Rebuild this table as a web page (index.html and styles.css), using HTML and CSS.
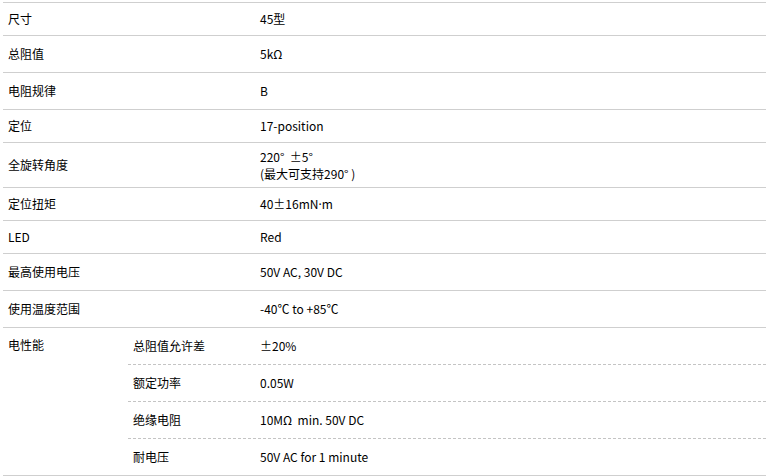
FILE: index.html
```html
<!DOCTYPE html>
<html lang="zh">
<head>
<meta charset="utf-8">
<link rel="stylesheet" href="styles.css">
</head>
<body>
<div class="spec">
  <div class="row h33"><div class="label">尺寸</div><div class="value">45型</div></div>
  <div class="row h37"><div class="label">总阻值</div><div class="value">5kΩ</div></div>
  <div class="row h37"><div class="label">电阻规律</div><div class="value">B</div></div>
  <div class="row h33"><div class="label">定位</div><div class="value">17-position</div></div>
  <div class="row h45"><div class="label">全旋转角度</div><div class="value multi">220°  ±5°<br>(最大可支持290° )</div></div>
  <div class="row h33"><div class="label">定位扭矩</div><div class="value">40±16mN<span class="latin">·</span>m</div></div>
  <div class="row h33"><div class="label">LED</div><div class="value">Red</div></div>
  <div class="row h37"><div class="label">最高使用电压</div><div class="value">50V AC, 30V DC</div></div>
  <div class="row h37"><div class="label">使用温度范围</div><div class="value">-40℃ to +85℃</div></div>
  <div class="row group">
    <div class="label group-label">电性能</div>
    <div class="subs">
      <div class="subrow"><div class="label">总阻值允许差</div><div class="value">±20%</div></div>
      <div class="subrow"><div class="label">额定功率</div><div class="value">0.05W</div></div>
      <div class="subrow"><div class="label">绝缘电阻</div><div class="value">10MΩ  min. 50V DC</div></div>
      <div class="subrow"><div class="label">耐电压</div><div class="value">50V AC for 1 minute</div></div>
    </div>
  </div>
</div>
</body>
</html>
```
FILE: styles.css
```css
html, body {
  margin: 0;
  padding: 0;
  background: #fff;
}
body {
  padding: 2px 0 0 3px;
  font-family: "Noto Sans CJK JP", "Noto Sans CJK SC", sans-serif;
  font-size: 12px;
  line-height: 14px;
  color: #000;
}
.spec {
  width: 763px;
  border-top: 1px solid #cfcfcf;
}
.row {
  display: grid;
  grid-template-columns: 252px 1fr;
  align-items: center;
  box-sizing: border-box;
  border-bottom: 1px solid #cfcfcf;
}
.label, .value {
  padding: 0 5px;
  white-space: pre;
}
.h33 { height: 33px; }
.h37 { height: 37px; }
.h45 { height: 45px; }
.multi {
  line-height: 17px;
}
.row.group {
  grid-template-columns: 125px 1fr;
  align-items: start;
}
.group-label {
  padding-top: 10px;
}
.subs {
  display: flex;
  flex-direction: column;
}
.subrow {
  display: grid;
  grid-template-columns: 127px 1fr;
  align-items: center;
  box-sizing: border-box;
  height: 37px;
  border-bottom: 1px dashed #c4c4c4;
}
.subrow:last-child {
  height: 36px;
  border-bottom: none;
}
.latin {
  font-family: "Noto Sans", sans-serif;
}
```
